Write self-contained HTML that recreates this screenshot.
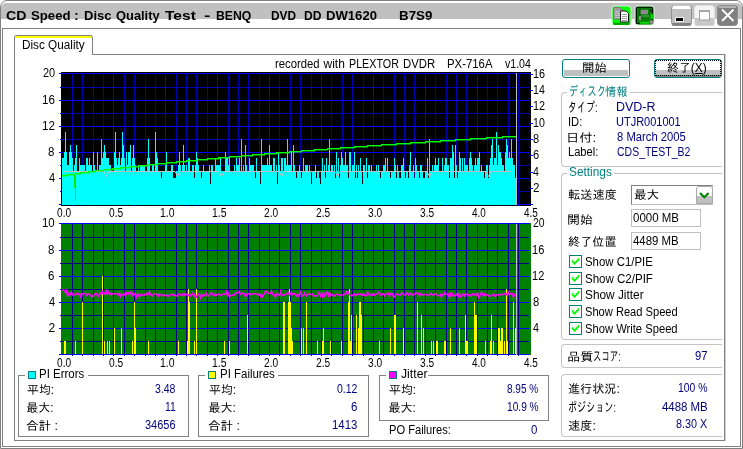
<!DOCTYPE html><html><head><meta charset="utf-8"><title>CD Speed</title><style>
html,body{margin:0;padding:0;background:#fff;}
body{width:743px;height:449px;position:relative;overflow:hidden;font-family:"Liberation Sans","IPAGothic","Noto Sans CJK JP",sans-serif;font-size:12px;color:#000;}
.a{position:absolute;box-sizing:border-box;}
.t{position:absolute;white-space:nowrap;line-height:16px;height:16px;transform-origin:0 0;display:inline-block;}
.grp{position:absolute;box-sizing:border-box;border:1px solid #c4c4c4;border-right-color:transparent;border-radius:4px 2px 2px 4px;}
.sq{position:absolute;box-sizing:border-box;border:1px solid #808080;}
.edit{position:absolute;box-sizing:border-box;border:1px solid #c0c0c0;background:#fff;}
.cb{position:absolute;box-sizing:border-box;width:13px;height:13px;border:1px solid #008080;background:#fff;}
.leg{position:absolute;box-sizing:border-box;width:8px;height:8px;border:1px solid #008080;}
.btn{position:absolute;box-sizing:border-box;border:1px solid #008080;border-radius:3px;background:#fff;}
.btn i{position:absolute;left:1px;right:1px;top:10px;height:6px;background:#c0c0c0;}
.mask{position:absolute;background:#fff;}
</style></head><body>
<div class="a" style="left:0;top:0;width:743px;height:449px;border:1px solid #808080;border-radius:7px 7px 0 0;"></div>
<div class="a" style="left:1px;top:3px;width:741px;height:16px;background:#c0c0c0;border-radius:5px 5px 0 0;"></div>
<div class="a" style="left:2px;top:28px;width:739px;height:419px;border:1px solid #808080;"></div>
<div class="a" style="left:14px;top:54px;width:711px;height:387px;border:1px solid #808080;box-shadow:1px 0 0 #d4d4d4;"></div>
<div class="a" style="left:14px;top:35px;width:79px;height:20px;border:1px solid #808080;border-bottom:none;border-radius:3px 3px 0 0;background:#fff;"></div>
<div class="a" style="left:15px;top:36px;width:77px;height:2px;background:#ffff00;border-radius:2px 2px 0 0;"></div>

<svg class="a" style="left:606px;top:0" width="137" height="30" viewBox="606 0 137 30">
<rect x="612" y="6" width="19" height="19" rx="3" fill="#00ff00" stroke="#e8ffe8" stroke-width="0.8"/>
<path d="M613 22.5h17v1a1.500 1.500 0 0 1 -1.500 1.500h-14a1.500 1.500 0 0 1 -1.500 -1.500z" fill="#00a800"/>
<path d="M613.500 7.500h6.500l2.500 2.500v9h-9z" fill="#9c9c9c" stroke="#787878" stroke-width="1"/>
<path d="M615 11.500h5M615 13.500h5M615 15.500h5M615 17.500h5" stroke="#c8c8c8" stroke-width="1"/>
<path d="M620.500 11h5.500l2.500 2.500v8.500h-8z" fill="#fff" stroke="#181818" stroke-width="1"/>
<path d="M622 14.500h5M622 16.500h5M622 18.500h5M622 20.500h5" stroke="#a0a0a0" stroke-width="1"/>
<rect x="635" y="6" width="19" height="19" rx="3" fill="#008000" stroke="#e8ffe8" stroke-width="0.800"/>
<rect x="636.500" y="7.500" width="16" height="16" fill="none" stroke="#001800" stroke-width="1"/>
<rect x="640.500" y="9.800" width="7.500" height="4.500" fill="#8c8c8c"/>
<rect x="639" y="8.500" width="1.300" height="12" fill="#303030"/>
<rect x="650" y="9.500" width="1.500" height="2" fill="#101010"/>
<rect x="639" y="16" width="2" height="4.500" fill="#909090"/>
<rect x="641.500" y="15.500" width="8" height="1" fill="#70a070"/>
<rect x="639.800" y="21.800" width="9.600" height="2" fill="#00e000"/>
<rect x="650.600" y="14" width="2.900" height="5" fill="#00d000"/>
<rect x="649.800" y="20.400" width="3.300" height="3.400" fill="#909090"/>
<rect x="671.5" y="5.5" width="20" height="20" rx="3" fill="#c0c0c0" stroke="#909090" stroke-width="1"/>
<path d="M672.5 9v-1.500a2 2 0 0 1 2 -2h14a2 2 0 0 1 2 2v1.500z" fill="#fff"/>
<rect x="672" y="23" width="19" height="2.500" fill="#808080"/>
<rect x="675" y="17" width="9" height="5" fill="#f0f0f0"/>
<rect x="676" y="18" width="7" height="3" fill="#000"/>
<rect x="694.500" y="5.500" width="20" height="20" rx="3" fill="#f4f4f4" stroke="#e0e0e0" stroke-width="1"/>
<rect x="695" y="18" width="19" height="7.500" fill="#c8c8c8"/>
<rect x="699.500" y="10.500" width="10" height="9.500" fill="#fff" stroke="#a0a0a0" stroke-width="1"/>
<rect x="699.500" y="10" width="10" height="2" fill="#a8a8a8"/>
<rect x="717.500" y="5.500" width="20" height="20" rx="3" fill="#808080" stroke="#8c8c8c" stroke-width="1"/>
<rect x="719" y="6" width="17" height="2" fill="#b4b4b4"/>
<path d="M722 9.500L733.500 21M733.500 9.500L722 21" stroke="#fff" stroke-width="1.800" fill="none"/>
</svg>

<div class="btn" style="left:562px;top:59px;width:68px;height:19px;"><i></i></div>
<div class="btn" style="left:654px;top:59px;width:68px;height:19px;"><i style="left:0;right:0;height:5px"></i><i style="left:0;right:0;top:15px;height:2px;background:#808080"></i></div>
<div class="a" style="left:655px;top:60px;width:66px;height:16px;border:1px dotted #000;"></div>
<div class="grp" style="left:561px;top:92px;width:162px;height:75px;"></div>
<div class="mask" style="left:567px;top:91px;width:63px;height:3px;"></div>
<div class="grp" style="left:561px;top:173px;width:162px;height:167px;"></div>
<div class="mask" style="left:567px;top:172px;width:47px;height:3px;"></div>
<div class="grp" style="left:561px;top:344px;width:162px;height:24px;"></div>
<div class="grp" style="left:561px;top:374px;width:162px;height:63px;"></div>
<div class="a" style="left:631px;top:185px;width:82px;height:20px;border:1px solid #808080;border-right-color:#c0c0c0;border-bottom-color:#c0c0c0;background:#fff;"></div>
<div class="a" style="left:696px;top:186px;width:17px;height:18px;background:linear-gradient(#fff 0,#fff 9px,#c0c0c0 9px,#c0c0c0 100%);border:1px solid #a8a8a8;border-radius:3px 3px 0 0;"></div>
<svg class="a" style="left:696px;top:186px" width="17" height="18" viewBox="0 0 17 18"><path d="M4 7 L8.3 11.3 L12.600 7" fill="none" stroke="#008000" stroke-width="2.200"/></svg>
<div class="edit" style="left:631px;top:209px;width:70px;height:18px;"></div>
<div class="edit" style="left:631px;top:232px;width:70px;height:18px;"></div>
<div class="cb" style="left:569px;top:255.0px;"></div>
<svg class="a" style="left:569px;top:255.0px" width="13" height="13" viewBox="0 0 13 13"><path d="M3 4.5v2.8l2.5 2.700l4.500-4.800v-2.800l-4.500 4.800z" fill="#00ff00"/></svg>
<div class="cb" style="left:569px;top:272.0px;"></div>
<svg class="a" style="left:569px;top:272.0px" width="13" height="13" viewBox="0 0 13 13"><path d="M3 4.5v2.8l2.5 2.700l4.500-4.800v-2.800l-4.500 4.800z" fill="#00ff00"/></svg>
<div class="cb" style="left:569px;top:288.0px;"></div>
<svg class="a" style="left:569px;top:288.0px" width="13" height="13" viewBox="0 0 13 13"><path d="M3 4.5v2.8l2.5 2.700l4.500-4.800v-2.800l-4.500 4.800z" fill="#00ff00"/></svg>
<div class="cb" style="left:569px;top:305.0px;"></div>
<svg class="a" style="left:569px;top:305.0px" width="13" height="13" viewBox="0 0 13 13"><path d="M3 4.5v2.8l2.5 2.700l4.500-4.800v-2.800l-4.500 4.800z" fill="#00ff00"/></svg>
<div class="cb" style="left:569px;top:322.0px;"></div>
<svg class="a" style="left:569px;top:322.0px" width="13" height="13" viewBox="0 0 13 13"><path d="M3 4.5v2.8l2.5 2.700l4.500-4.800v-2.800l-4.500 4.800z" fill="#00ff00"/></svg>
<div class="sq" style="left:18px;top:375px;width:171px;height:62px;"></div>
<div class="mask" style="left:25px;top:374px;width:63px;height:3px;"></div>
<div class="leg" style="left:28px;top:371px;background:#00ffff;"></div>
<div class="sq" style="left:198px;top:375px;width:171px;height:62px;"></div>
<div class="mask" style="left:205px;top:374px;width:73px;height:3px;"></div>
<div class="leg" style="left:208px;top:371px;background:#ffff00;"></div>
<div class="sq" style="left:379px;top:375px;width:170px;height:46px;"></div>
<div class="mask" style="left:386px;top:374px;width:42px;height:3px;"></div>
<div class="leg" style="left:389px;top:371px;background:#ff00ff;"></div>
<svg id="charts" width="743" height="449" viewBox="0 0 743 449" style="position:absolute;left:0;top:0" shape-rendering="crispEdges">
<rect x="61" y="72" width="470" height="134" fill="#000"/>
<rect x="72" y="73" width="1" height="133" fill="#0000b0"/>
<rect x="82" y="73" width="1" height="133" fill="#0000b0"/>
<rect x="93" y="73" width="1" height="133" fill="#0000b0"/>
<rect x="103" y="73" width="1" height="133" fill="#0000b0"/>
<rect x="113" y="73" width="1" height="133" fill="#0000ff"/>
<rect x="124" y="73" width="1" height="133" fill="#0000b0"/>
<rect x="134" y="73" width="1" height="133" fill="#0000b0"/>
<rect x="145" y="73" width="1" height="133" fill="#0000b0"/>
<rect x="155" y="73" width="1" height="133" fill="#0000b0"/>
<rect x="165" y="73" width="1" height="133" fill="#0000ff"/>
<rect x="176" y="73" width="1" height="133" fill="#0000b0"/>
<rect x="186" y="73" width="1" height="133" fill="#0000b0"/>
<rect x="196" y="73" width="1" height="133" fill="#0000b0"/>
<rect x="207" y="73" width="1" height="133" fill="#0000b0"/>
<rect x="217" y="73" width="1" height="133" fill="#0000ff"/>
<rect x="228" y="73" width="1" height="133" fill="#0000b0"/>
<rect x="238" y="73" width="1" height="133" fill="#0000b0"/>
<rect x="248" y="73" width="1" height="133" fill="#0000b0"/>
<rect x="259" y="73" width="1" height="133" fill="#0000b0"/>
<rect x="269" y="73" width="1" height="133" fill="#0000ff"/>
<rect x="279" y="73" width="1" height="133" fill="#0000b0"/>
<rect x="290" y="73" width="1" height="133" fill="#0000b0"/>
<rect x="300" y="73" width="1" height="133" fill="#0000b0"/>
<rect x="311" y="73" width="1" height="133" fill="#0000b0"/>
<rect x="321" y="73" width="1" height="133" fill="#0000ff"/>
<rect x="331" y="73" width="1" height="133" fill="#0000b0"/>
<rect x="342" y="73" width="1" height="133" fill="#0000b0"/>
<rect x="352" y="73" width="1" height="133" fill="#0000b0"/>
<rect x="363" y="73" width="1" height="133" fill="#0000b0"/>
<rect x="373" y="73" width="1" height="133" fill="#0000ff"/>
<rect x="383" y="73" width="1" height="133" fill="#0000b0"/>
<rect x="394" y="73" width="1" height="133" fill="#0000b0"/>
<rect x="404" y="73" width="1" height="133" fill="#0000b0"/>
<rect x="414" y="73" width="1" height="133" fill="#0000b0"/>
<rect x="425" y="73" width="1" height="133" fill="#0000ff"/>
<rect x="435" y="73" width="1" height="133" fill="#0000b0"/>
<rect x="446" y="73" width="1" height="133" fill="#0000b0"/>
<rect x="456" y="73" width="1" height="133" fill="#0000b0"/>
<rect x="466" y="73" width="1" height="133" fill="#0000b0"/>
<rect x="477" y="73" width="1" height="133" fill="#0000ff"/>
<rect x="487" y="73" width="1" height="133" fill="#0000b0"/>
<rect x="497" y="73" width="1" height="133" fill="#0000b0"/>
<rect x="508" y="73" width="1" height="133" fill="#0000b0"/>
<rect x="518" y="73" width="1" height="133" fill="#0000b0"/>
<rect x="59" y="204" width="470" height="1" fill="#0000ff"/>
<rect x="60" y="191" width="469" height="1" fill="#0000b0"/>
<rect x="59" y="178" width="470" height="1" fill="#0000ff"/>
<rect x="60" y="165" width="469" height="1" fill="#0000b0"/>
<rect x="59" y="152" width="470" height="1" fill="#0000ff"/>
<rect x="60" y="139" width="469" height="1" fill="#0000b0"/>
<rect x="59" y="126" width="470" height="1" fill="#0000ff"/>
<rect x="60" y="113" width="469" height="1" fill="#0000b0"/>
<rect x="59" y="100" width="470" height="1" fill="#0000ff"/>
<rect x="60" y="87" width="469" height="1" fill="#0000b0"/>
<rect x="59" y="73" width="470" height="1" fill="#0000ff"/>
<rect x="529" y="204" width="4" height="1" fill="#0000ff"/>
<rect x="529" y="196" width="2" height="1" fill="#0000e0"/>
<rect x="529" y="188" width="4" height="1" fill="#0000ff"/>
<rect x="529" y="180" width="2" height="1" fill="#0000e0"/>
<rect x="529" y="172" width="4" height="1" fill="#0000ff"/>
<rect x="529" y="164" width="2" height="1" fill="#0000e0"/>
<rect x="529" y="155" width="4" height="1" fill="#0000ff"/>
<rect x="529" y="147" width="2" height="1" fill="#0000e0"/>
<rect x="529" y="139" width="4" height="1" fill="#0000ff"/>
<rect x="529" y="131" width="2" height="1" fill="#0000e0"/>
<rect x="529" y="123" width="4" height="1" fill="#0000ff"/>
<rect x="529" y="114" width="2" height="1" fill="#0000e0"/>
<rect x="529" y="106" width="4" height="1" fill="#0000ff"/>
<rect x="529" y="98" width="2" height="1" fill="#0000e0"/>
<rect x="529" y="90" width="4" height="1" fill="#0000ff"/>
<rect x="529" y="82" width="2" height="1" fill="#0000e0"/>
<rect x="529" y="74" width="4" height="1" fill="#0000ff"/>
<rect x="62" y="158" width="2" height="47" fill="#00ffff"/>
<rect x="64" y="152" width="1" height="53" fill="#00ffff"/>
<rect x="65" y="132" width="1" height="73" fill="#00ffff"/>
<rect x="66" y="152" width="1" height="53" fill="#00ffff"/>
<rect x="67" y="165" width="2" height="40" fill="#00ffff"/>
<rect x="69" y="152" width="1" height="53" fill="#00ffff"/>
<rect x="70" y="145" width="1" height="60" fill="#00ffff"/>
<rect x="71" y="152" width="1" height="53" fill="#00ffff"/>
<rect x="72" y="158" width="1" height="47" fill="#00ffff"/>
<rect x="73" y="171" width="1" height="34" fill="#00ffff"/>
<rect x="74" y="165" width="1" height="40" fill="#00ffff"/>
<rect x="75" y="158" width="1" height="47" fill="#00ffff"/>
<rect x="76" y="145" width="1" height="60" fill="#00ffff"/>
<rect x="77" y="171" width="2" height="34" fill="#00ffff"/>
<rect x="79" y="158" width="1" height="47" fill="#00ffff"/>
<rect x="80" y="165" width="5" height="40" fill="#00ffff"/>
<rect x="85" y="171" width="1" height="34" fill="#00ffff"/>
<rect x="86" y="158" width="2" height="47" fill="#00ffff"/>
<rect x="88" y="165" width="1" height="40" fill="#00ffff"/>
<rect x="89" y="158" width="1" height="47" fill="#00ffff"/>
<rect x="90" y="165" width="2" height="40" fill="#00ffff"/>
<rect x="92" y="171" width="1" height="34" fill="#00ffff"/>
<rect x="93" y="152" width="1" height="53" fill="#00ffff"/>
<rect x="94" y="165" width="1" height="40" fill="#00ffff"/>
<rect x="95" y="171" width="2" height="34" fill="#00ffff"/>
<rect x="97" y="152" width="1" height="53" fill="#00ffff"/>
<rect x="98" y="171" width="1" height="34" fill="#00ffff"/>
<rect x="99" y="165" width="2" height="40" fill="#00ffff"/>
<rect x="101" y="139" width="1" height="66" fill="#00ffff"/>
<rect x="102" y="158" width="1" height="47" fill="#00ffff"/>
<rect x="103" y="152" width="1" height="53" fill="#00ffff"/>
<rect x="104" y="145" width="1" height="60" fill="#00ffff"/>
<rect x="105" y="152" width="1" height="53" fill="#00ffff"/>
<rect x="106" y="158" width="3" height="47" fill="#00ffff"/>
<rect x="109" y="165" width="2" height="40" fill="#00ffff"/>
<rect x="111" y="171" width="3" height="34" fill="#00ffff"/>
<rect x="114" y="152" width="1" height="53" fill="#00ffff"/>
<rect x="115" y="132" width="1" height="73" fill="#00ffff"/>
<rect x="116" y="158" width="1" height="47" fill="#00ffff"/>
<rect x="117" y="165" width="1" height="40" fill="#00ffff"/>
<rect x="118" y="158" width="1" height="47" fill="#00ffff"/>
<rect x="119" y="152" width="1" height="53" fill="#00ffff"/>
<rect x="120" y="165" width="1" height="40" fill="#00ffff"/>
<rect x="121" y="158" width="1" height="47" fill="#00ffff"/>
<rect x="122" y="132" width="1" height="73" fill="#00ffff"/>
<rect x="123" y="145" width="1" height="60" fill="#00ffff"/>
<rect x="124" y="158" width="1" height="47" fill="#00ffff"/>
<rect x="125" y="171" width="1" height="34" fill="#00ffff"/>
<rect x="126" y="152" width="1" height="53" fill="#00ffff"/>
<rect x="127" y="165" width="1" height="40" fill="#00ffff"/>
<rect x="128" y="152" width="2" height="53" fill="#00ffff"/>
<rect x="130" y="145" width="1" height="60" fill="#00ffff"/>
<rect x="131" y="171" width="1" height="34" fill="#00ffff"/>
<rect x="132" y="158" width="1" height="47" fill="#00ffff"/>
<rect x="133" y="145" width="1" height="60" fill="#00ffff"/>
<rect x="134" y="158" width="1" height="47" fill="#00ffff"/>
<rect x="135" y="165" width="1" height="40" fill="#00ffff"/>
<rect x="136" y="171" width="2" height="34" fill="#00ffff"/>
<rect x="138" y="165" width="1" height="40" fill="#00ffff"/>
<rect x="139" y="171" width="1" height="34" fill="#00ffff"/>
<rect x="140" y="165" width="5" height="40" fill="#00ffff"/>
<rect x="145" y="171" width="2" height="34" fill="#00ffff"/>
<rect x="147" y="158" width="1" height="47" fill="#00ffff"/>
<rect x="148" y="139" width="1" height="66" fill="#00ffff"/>
<rect x="149" y="158" width="1" height="47" fill="#00ffff"/>
<rect x="150" y="171" width="2" height="34" fill="#00ffff"/>
<rect x="152" y="165" width="2" height="40" fill="#00ffff"/>
<rect x="154" y="171" width="1" height="34" fill="#00ffff"/>
<rect x="155" y="132" width="1" height="73" fill="#00ffff"/>
<rect x="156" y="152" width="1" height="53" fill="#00ffff"/>
<rect x="157" y="158" width="1" height="47" fill="#00ffff"/>
<rect x="158" y="171" width="3" height="34" fill="#00ffff"/>
<rect x="161" y="178" width="1" height="27" fill="#00ffff"/>
<rect x="162" y="171" width="3" height="34" fill="#00ffff"/>
<rect x="165" y="165" width="1" height="40" fill="#00ffff"/>
<rect x="166" y="152" width="1" height="53" fill="#00ffff"/>
<rect x="167" y="171" width="4" height="34" fill="#00ffff"/>
<rect x="171" y="165" width="2" height="40" fill="#00ffff"/>
<rect x="173" y="178" width="3" height="27" fill="#00ffff"/>
<rect x="176" y="171" width="2" height="34" fill="#00ffff"/>
<rect x="178" y="165" width="1" height="40" fill="#00ffff"/>
<rect x="179" y="152" width="1" height="53" fill="#00ffff"/>
<rect x="180" y="165" width="1" height="40" fill="#00ffff"/>
<rect x="181" y="171" width="1" height="34" fill="#00ffff"/>
<rect x="182" y="165" width="1" height="40" fill="#00ffff"/>
<rect x="183" y="145" width="1" height="60" fill="#00ffff"/>
<rect x="184" y="165" width="1" height="40" fill="#00ffff"/>
<rect x="185" y="171" width="1" height="34" fill="#00ffff"/>
<rect x="186" y="165" width="1" height="40" fill="#00ffff"/>
<rect x="187" y="171" width="1" height="34" fill="#00ffff"/>
<rect x="188" y="158" width="2" height="47" fill="#00ffff"/>
<rect x="190" y="171" width="2" height="34" fill="#00ffff"/>
<rect x="192" y="165" width="2" height="40" fill="#00ffff"/>
<rect x="194" y="178" width="1" height="27" fill="#00ffff"/>
<rect x="195" y="165" width="1" height="40" fill="#00ffff"/>
<rect x="196" y="152" width="1" height="53" fill="#00ffff"/>
<rect x="197" y="158" width="1" height="47" fill="#00ffff"/>
<rect x="198" y="165" width="1" height="40" fill="#00ffff"/>
<rect x="199" y="171" width="2" height="34" fill="#00ffff"/>
<rect x="201" y="178" width="1" height="27" fill="#00ffff"/>
<rect x="202" y="171" width="1" height="34" fill="#00ffff"/>
<rect x="203" y="165" width="1" height="40" fill="#00ffff"/>
<rect x="204" y="171" width="5" height="34" fill="#00ffff"/>
<rect x="209" y="165" width="1" height="40" fill="#00ffff"/>
<rect x="210" y="184" width="1" height="21" fill="#00ffff"/>
<rect x="211" y="165" width="2" height="40" fill="#00ffff"/>
<rect x="213" y="171" width="2" height="34" fill="#00ffff"/>
<rect x="215" y="158" width="1" height="47" fill="#00ffff"/>
<rect x="216" y="165" width="4" height="40" fill="#00ffff"/>
<rect x="220" y="158" width="1" height="47" fill="#00ffff"/>
<rect x="221" y="171" width="4" height="34" fill="#00ffff"/>
<rect x="225" y="152" width="1" height="53" fill="#00ffff"/>
<rect x="226" y="158" width="2" height="47" fill="#00ffff"/>
<rect x="228" y="165" width="1" height="40" fill="#00ffff"/>
<rect x="229" y="158" width="1" height="47" fill="#00ffff"/>
<rect x="230" y="171" width="4" height="34" fill="#00ffff"/>
<rect x="234" y="165" width="1" height="40" fill="#00ffff"/>
<rect x="235" y="171" width="1" height="34" fill="#00ffff"/>
<rect x="236" y="158" width="1" height="47" fill="#00ffff"/>
<rect x="237" y="165" width="2" height="40" fill="#00ffff"/>
<rect x="239" y="158" width="1" height="47" fill="#00ffff"/>
<rect x="240" y="171" width="1" height="34" fill="#00ffff"/>
<rect x="241" y="139" width="1" height="66" fill="#00ffff"/>
<rect x="242" y="171" width="1" height="34" fill="#00ffff"/>
<rect x="243" y="165" width="1" height="40" fill="#00ffff"/>
<rect x="244" y="171" width="1" height="34" fill="#00ffff"/>
<rect x="245" y="145" width="1" height="60" fill="#00ffff"/>
<rect x="246" y="165" width="1" height="40" fill="#00ffff"/>
<rect x="247" y="171" width="2" height="34" fill="#00ffff"/>
<rect x="249" y="158" width="1" height="47" fill="#00ffff"/>
<rect x="250" y="165" width="4" height="40" fill="#00ffff"/>
<rect x="254" y="171" width="1" height="34" fill="#00ffff"/>
<rect x="255" y="178" width="1" height="27" fill="#00ffff"/>
<rect x="256" y="158" width="1" height="47" fill="#00ffff"/>
<rect x="257" y="171" width="3" height="34" fill="#00ffff"/>
<rect x="260" y="184" width="1" height="21" fill="#00ffff"/>
<rect x="261" y="139" width="1" height="66" fill="#00ffff"/>
<rect x="262" y="165" width="5" height="40" fill="#00ffff"/>
<rect x="267" y="158" width="1" height="47" fill="#00ffff"/>
<rect x="268" y="165" width="1" height="40" fill="#00ffff"/>
<rect x="269" y="145" width="1" height="60" fill="#00ffff"/>
<rect x="270" y="165" width="2" height="40" fill="#00ffff"/>
<rect x="272" y="171" width="1" height="34" fill="#00ffff"/>
<rect x="273" y="158" width="2" height="47" fill="#00ffff"/>
<rect x="275" y="171" width="1" height="34" fill="#00ffff"/>
<rect x="276" y="165" width="1" height="40" fill="#00ffff"/>
<rect x="277" y="184" width="1" height="21" fill="#00ffff"/>
<rect x="278" y="152" width="1" height="53" fill="#00ffff"/>
<rect x="279" y="165" width="1" height="40" fill="#00ffff"/>
<rect x="280" y="171" width="1" height="34" fill="#00ffff"/>
<rect x="281" y="158" width="2" height="47" fill="#00ffff"/>
<rect x="283" y="171" width="1" height="34" fill="#00ffff"/>
<rect x="284" y="158" width="2" height="47" fill="#00ffff"/>
<rect x="286" y="165" width="1" height="40" fill="#00ffff"/>
<rect x="287" y="139" width="1" height="66" fill="#00ffff"/>
<rect x="288" y="165" width="3" height="40" fill="#00ffff"/>
<rect x="291" y="152" width="1" height="53" fill="#00ffff"/>
<rect x="292" y="171" width="1" height="34" fill="#00ffff"/>
<rect x="293" y="145" width="1" height="60" fill="#00ffff"/>
<rect x="294" y="165" width="1" height="40" fill="#00ffff"/>
<rect x="295" y="171" width="1" height="34" fill="#00ffff"/>
<rect x="296" y="178" width="1" height="27" fill="#00ffff"/>
<rect x="297" y="171" width="2" height="34" fill="#00ffff"/>
<rect x="299" y="165" width="1" height="40" fill="#00ffff"/>
<rect x="300" y="171" width="1" height="34" fill="#00ffff"/>
<rect x="301" y="178" width="1" height="27" fill="#00ffff"/>
<rect x="302" y="171" width="1" height="34" fill="#00ffff"/>
<rect x="303" y="158" width="1" height="47" fill="#00ffff"/>
<rect x="304" y="171" width="1" height="34" fill="#00ffff"/>
<rect x="305" y="165" width="3" height="40" fill="#00ffff"/>
<rect x="308" y="171" width="1" height="34" fill="#00ffff"/>
<rect x="309" y="165" width="1" height="40" fill="#00ffff"/>
<rect x="310" y="171" width="1" height="34" fill="#00ffff"/>
<rect x="311" y="184" width="1" height="21" fill="#00ffff"/>
<rect x="312" y="171" width="3" height="34" fill="#00ffff"/>
<rect x="315" y="165" width="1" height="40" fill="#00ffff"/>
<rect x="316" y="178" width="1" height="27" fill="#00ffff"/>
<rect x="317" y="171" width="2" height="34" fill="#00ffff"/>
<rect x="319" y="178" width="1" height="27" fill="#00ffff"/>
<rect x="320" y="184" width="1" height="21" fill="#00ffff"/>
<rect x="321" y="171" width="1" height="34" fill="#00ffff"/>
<rect x="322" y="158" width="1" height="47" fill="#00ffff"/>
<rect x="323" y="171" width="1" height="34" fill="#00ffff"/>
<rect x="324" y="165" width="1" height="40" fill="#00ffff"/>
<rect x="325" y="178" width="1" height="27" fill="#00ffff"/>
<rect x="326" y="158" width="1" height="47" fill="#00ffff"/>
<rect x="327" y="171" width="1" height="34" fill="#00ffff"/>
<rect x="328" y="165" width="1" height="40" fill="#00ffff"/>
<rect x="329" y="139" width="1" height="66" fill="#00ffff"/>
<rect x="330" y="171" width="1" height="34" fill="#00ffff"/>
<rect x="331" y="165" width="2" height="40" fill="#00ffff"/>
<rect x="333" y="171" width="1" height="34" fill="#00ffff"/>
<rect x="334" y="165" width="1" height="40" fill="#00ffff"/>
<rect x="335" y="178" width="1" height="27" fill="#00ffff"/>
<rect x="336" y="152" width="1" height="53" fill="#00ffff"/>
<rect x="337" y="171" width="1" height="34" fill="#00ffff"/>
<rect x="338" y="158" width="1" height="47" fill="#00ffff"/>
<rect x="339" y="178" width="1" height="27" fill="#00ffff"/>
<rect x="340" y="165" width="1" height="40" fill="#00ffff"/>
<rect x="341" y="152" width="1" height="53" fill="#00ffff"/>
<rect x="342" y="158" width="1" height="47" fill="#00ffff"/>
<rect x="343" y="165" width="2" height="40" fill="#00ffff"/>
<rect x="345" y="152" width="1" height="53" fill="#00ffff"/>
<rect x="346" y="165" width="2" height="40" fill="#00ffff"/>
<rect x="348" y="178" width="1" height="27" fill="#00ffff"/>
<rect x="349" y="152" width="2" height="53" fill="#00ffff"/>
<rect x="351" y="171" width="1" height="34" fill="#00ffff"/>
<rect x="352" y="165" width="2" height="40" fill="#00ffff"/>
<rect x="354" y="152" width="1" height="53" fill="#00ffff"/>
<rect x="355" y="178" width="1" height="27" fill="#00ffff"/>
<rect x="356" y="165" width="1" height="40" fill="#00ffff"/>
<rect x="357" y="178" width="1" height="27" fill="#00ffff"/>
<rect x="358" y="165" width="1" height="40" fill="#00ffff"/>
<rect x="359" y="171" width="1" height="34" fill="#00ffff"/>
<rect x="360" y="158" width="1" height="47" fill="#00ffff"/>
<rect x="361" y="171" width="1" height="34" fill="#00ffff"/>
<rect x="362" y="184" width="1" height="21" fill="#00ffff"/>
<rect x="363" y="165" width="2" height="40" fill="#00ffff"/>
<rect x="365" y="171" width="1" height="34" fill="#00ffff"/>
<rect x="366" y="158" width="1" height="47" fill="#00ffff"/>
<rect x="367" y="178" width="1" height="27" fill="#00ffff"/>
<rect x="368" y="165" width="2" height="40" fill="#00ffff"/>
<rect x="370" y="171" width="1" height="34" fill="#00ffff"/>
<rect x="371" y="165" width="1" height="40" fill="#00ffff"/>
<rect x="372" y="171" width="4" height="34" fill="#00ffff"/>
<rect x="376" y="165" width="1" height="40" fill="#00ffff"/>
<rect x="377" y="171" width="1" height="34" fill="#00ffff"/>
<rect x="378" y="165" width="1" height="40" fill="#00ffff"/>
<rect x="379" y="171" width="1" height="34" fill="#00ffff"/>
<rect x="380" y="178" width="1" height="27" fill="#00ffff"/>
<rect x="381" y="171" width="2" height="34" fill="#00ffff"/>
<rect x="383" y="165" width="2" height="40" fill="#00ffff"/>
<rect x="385" y="158" width="1" height="47" fill="#00ffff"/>
<rect x="386" y="171" width="1" height="34" fill="#00ffff"/>
<rect x="387" y="158" width="1" height="47" fill="#00ffff"/>
<rect x="388" y="171" width="2" height="34" fill="#00ffff"/>
<rect x="390" y="178" width="1" height="27" fill="#00ffff"/>
<rect x="391" y="171" width="3" height="34" fill="#00ffff"/>
<rect x="394" y="158" width="1" height="47" fill="#00ffff"/>
<rect x="395" y="165" width="1" height="40" fill="#00ffff"/>
<rect x="396" y="178" width="1" height="27" fill="#00ffff"/>
<rect x="397" y="165" width="1" height="40" fill="#00ffff"/>
<rect x="398" y="171" width="1" height="34" fill="#00ffff"/>
<rect x="399" y="178" width="2" height="27" fill="#00ffff"/>
<rect x="401" y="165" width="2" height="40" fill="#00ffff"/>
<rect x="403" y="158" width="1" height="47" fill="#00ffff"/>
<rect x="404" y="171" width="1" height="34" fill="#00ffff"/>
<rect x="405" y="178" width="1" height="27" fill="#00ffff"/>
<rect x="406" y="171" width="2" height="34" fill="#00ffff"/>
<rect x="408" y="178" width="1" height="27" fill="#00ffff"/>
<rect x="409" y="165" width="1" height="40" fill="#00ffff"/>
<rect x="410" y="152" width="1" height="53" fill="#00ffff"/>
<rect x="411" y="171" width="2" height="34" fill="#00ffff"/>
<rect x="413" y="165" width="1" height="40" fill="#00ffff"/>
<rect x="414" y="178" width="1" height="27" fill="#00ffff"/>
<rect x="415" y="158" width="1" height="47" fill="#00ffff"/>
<rect x="416" y="165" width="1" height="40" fill="#00ffff"/>
<rect x="417" y="171" width="2" height="34" fill="#00ffff"/>
<rect x="419" y="178" width="1" height="27" fill="#00ffff"/>
<rect x="420" y="165" width="2" height="40" fill="#00ffff"/>
<rect x="422" y="171" width="1" height="34" fill="#00ffff"/>
<rect x="423" y="178" width="2" height="27" fill="#00ffff"/>
<rect x="425" y="171" width="2" height="34" fill="#00ffff"/>
<rect x="427" y="158" width="1" height="47" fill="#00ffff"/>
<rect x="428" y="178" width="1" height="27" fill="#00ffff"/>
<rect x="429" y="139" width="1" height="66" fill="#00ffff"/>
<rect x="430" y="171" width="2" height="34" fill="#00ffff"/>
<rect x="432" y="165" width="1" height="40" fill="#00ffff"/>
<rect x="433" y="171" width="1" height="34" fill="#00ffff"/>
<rect x="434" y="165" width="1" height="40" fill="#00ffff"/>
<rect x="435" y="158" width="1" height="47" fill="#00ffff"/>
<rect x="436" y="165" width="2" height="40" fill="#00ffff"/>
<rect x="438" y="158" width="1" height="47" fill="#00ffff"/>
<rect x="439" y="171" width="3" height="34" fill="#00ffff"/>
<rect x="442" y="158" width="1" height="47" fill="#00ffff"/>
<rect x="443" y="171" width="1" height="34" fill="#00ffff"/>
<rect x="444" y="165" width="1" height="40" fill="#00ffff"/>
<rect x="445" y="158" width="2" height="47" fill="#00ffff"/>
<rect x="447" y="165" width="2" height="40" fill="#00ffff"/>
<rect x="449" y="178" width="1" height="27" fill="#00ffff"/>
<rect x="450" y="158" width="2" height="47" fill="#00ffff"/>
<rect x="452" y="145" width="1" height="60" fill="#00ffff"/>
<rect x="453" y="152" width="1" height="53" fill="#00ffff"/>
<rect x="454" y="178" width="1" height="27" fill="#00ffff"/>
<rect x="455" y="145" width="1" height="60" fill="#00ffff"/>
<rect x="456" y="165" width="1" height="40" fill="#00ffff"/>
<rect x="457" y="178" width="1" height="27" fill="#00ffff"/>
<rect x="458" y="171" width="1" height="34" fill="#00ffff"/>
<rect x="459" y="152" width="1" height="53" fill="#00ffff"/>
<rect x="460" y="158" width="1" height="47" fill="#00ffff"/>
<rect x="461" y="171" width="1" height="34" fill="#00ffff"/>
<rect x="462" y="158" width="1" height="47" fill="#00ffff"/>
<rect x="463" y="171" width="1" height="34" fill="#00ffff"/>
<rect x="464" y="158" width="1" height="47" fill="#00ffff"/>
<rect x="465" y="165" width="3" height="40" fill="#00ffff"/>
<rect x="468" y="171" width="1" height="34" fill="#00ffff"/>
<rect x="469" y="158" width="1" height="47" fill="#00ffff"/>
<rect x="470" y="152" width="1" height="53" fill="#00ffff"/>
<rect x="471" y="158" width="1" height="47" fill="#00ffff"/>
<rect x="472" y="165" width="1" height="40" fill="#00ffff"/>
<rect x="473" y="171" width="1" height="34" fill="#00ffff"/>
<rect x="474" y="165" width="1" height="40" fill="#00ffff"/>
<rect x="475" y="158" width="1" height="47" fill="#00ffff"/>
<rect x="476" y="165" width="1" height="40" fill="#00ffff"/>
<rect x="477" y="158" width="2" height="47" fill="#00ffff"/>
<rect x="479" y="152" width="1" height="53" fill="#00ffff"/>
<rect x="480" y="171" width="1" height="34" fill="#00ffff"/>
<rect x="481" y="165" width="1" height="40" fill="#00ffff"/>
<rect x="482" y="171" width="2" height="34" fill="#00ffff"/>
<rect x="484" y="178" width="1" height="27" fill="#00ffff"/>
<rect x="485" y="171" width="1" height="34" fill="#00ffff"/>
<rect x="486" y="165" width="2" height="40" fill="#00ffff"/>
<rect x="488" y="178" width="1" height="27" fill="#00ffff"/>
<rect x="489" y="165" width="1" height="40" fill="#00ffff"/>
<rect x="490" y="158" width="1" height="47" fill="#00ffff"/>
<rect x="491" y="145" width="1" height="60" fill="#00ffff"/>
<rect x="492" y="139" width="1" height="66" fill="#00ffff"/>
<rect x="493" y="165" width="1" height="40" fill="#00ffff"/>
<rect x="494" y="158" width="2" height="47" fill="#00ffff"/>
<rect x="496" y="132" width="1" height="73" fill="#00ffff"/>
<rect x="497" y="165" width="1" height="40" fill="#00ffff"/>
<rect x="498" y="145" width="1" height="60" fill="#00ffff"/>
<rect x="499" y="152" width="2" height="53" fill="#00ffff"/>
<rect x="501" y="158" width="1" height="47" fill="#00ffff"/>
<rect x="502" y="165" width="2" height="40" fill="#00ffff"/>
<rect x="504" y="171" width="1" height="34" fill="#00ffff"/>
<rect x="505" y="152" width="1" height="53" fill="#00ffff"/>
<rect x="506" y="139" width="1" height="66" fill="#00ffff"/>
<rect x="507" y="145" width="1" height="60" fill="#00ffff"/>
<rect x="508" y="158" width="1" height="47" fill="#00ffff"/>
<rect x="509" y="152" width="1" height="53" fill="#00ffff"/>
<rect x="510" y="158" width="1" height="47" fill="#00ffff"/>
<rect x="511" y="139" width="1" height="66" fill="#00ffff"/>
<rect x="512" y="158" width="1" height="47" fill="#00ffff"/>
<rect x="513" y="165" width="2" height="40" fill="#00ffff"/>
<rect x="515" y="178" width="1" height="27" fill="#00ffff"/>
<rect x="516" y="158" width="1" height="47" fill="#00ffff"/>
<polyline fill="none" stroke="#c0c0c0" stroke-width="1" shape-rendering="auto" points="63.0,171.5 104.0,171.5 106.5,176.5 109.0,171.5 175.0,171.5 177.5,176.5 180.0,171.5 219.0,171.5 221.5,176.5 224.0,171.5 279.0,171.5 281.5,176.5 284.0,171.5 335.0,171.5 337.5,176.5 340.0,171.5 427.0,171.5 429.5,176.5 432.0,171.5 486.0,171.5 488.5,176.5 491.0,171.5 511.0,171.5"/>
<rect x="62" y="175" width="4" height="1" fill="#00ff00"/><rect x="66" y="174" width="1" height="2" fill="#00ff00"/><rect x="67" y="174" width="6" height="1" fill="#00ff00"/><rect x="73" y="173" width="1" height="2" fill="#00ff00"/><rect x="74" y="173" width="6" height="1" fill="#00ff00"/><rect x="80" y="172" width="1" height="2" fill="#00ff00"/><rect x="81" y="172" width="7" height="1" fill="#00ff00"/><rect x="88" y="171" width="1" height="2" fill="#00ff00"/><rect x="89" y="171" width="6" height="1" fill="#00ff00"/><rect x="95" y="170" width="1" height="2" fill="#00ff00"/><rect x="96" y="170" width="7" height="1" fill="#00ff00"/><rect x="103" y="169" width="1" height="2" fill="#00ff00"/><rect x="104" y="169" width="8" height="1" fill="#00ff00"/><rect x="112" y="168" width="1" height="2" fill="#00ff00"/><rect x="113" y="168" width="7" height="1" fill="#00ff00"/><rect x="120" y="167" width="1" height="2" fill="#00ff00"/><rect x="121" y="167" width="8" height="1" fill="#00ff00"/><rect x="129" y="166" width="1" height="2" fill="#00ff00"/><rect x="130" y="166" width="8" height="1" fill="#00ff00"/><rect x="138" y="165" width="1" height="2" fill="#00ff00"/><rect x="139" y="165" width="8" height="1" fill="#00ff00"/><rect x="147" y="164" width="1" height="2" fill="#00ff00"/><rect x="148" y="164" width="9" height="1" fill="#00ff00"/><rect x="157" y="163" width="1" height="2" fill="#00ff00"/><rect x="158" y="163" width="8" height="1" fill="#00ff00"/><rect x="166" y="162" width="1" height="2" fill="#00ff00"/><rect x="167" y="162" width="9" height="1" fill="#00ff00"/><rect x="176" y="161" width="1" height="2" fill="#00ff00"/><rect x="177" y="161" width="9" height="1" fill="#00ff00"/><rect x="186" y="160" width="1" height="2" fill="#00ff00"/><rect x="187" y="160" width="10" height="1" fill="#00ff00"/><rect x="197" y="159" width="1" height="2" fill="#00ff00"/><rect x="198" y="159" width="9" height="1" fill="#00ff00"/><rect x="207" y="158" width="1" height="2" fill="#00ff00"/><rect x="208" y="158" width="10" height="1" fill="#00ff00"/><rect x="218" y="157" width="1" height="2" fill="#00ff00"/><rect x="219" y="157" width="10" height="1" fill="#00ff00"/><rect x="229" y="156" width="1" height="2" fill="#00ff00"/><rect x="230" y="156" width="11" height="1" fill="#00ff00"/><rect x="241" y="155" width="1" height="2" fill="#00ff00"/><rect x="242" y="155" width="10" height="1" fill="#00ff00"/><rect x="252" y="154" width="1" height="2" fill="#00ff00"/><rect x="253" y="154" width="11" height="1" fill="#00ff00"/><rect x="264" y="153" width="1" height="2" fill="#00ff00"/><rect x="265" y="153" width="11" height="1" fill="#00ff00"/><rect x="276" y="152" width="1" height="2" fill="#00ff00"/><rect x="277" y="152" width="12" height="1" fill="#00ff00"/><rect x="289" y="151" width="1" height="2" fill="#00ff00"/><rect x="290" y="151" width="11" height="1" fill="#00ff00"/><rect x="301" y="150" width="1" height="2" fill="#00ff00"/><rect x="302" y="150" width="12" height="1" fill="#00ff00"/><rect x="314" y="149" width="1" height="2" fill="#00ff00"/><rect x="315" y="149" width="12" height="1" fill="#00ff00"/><rect x="327" y="148" width="1" height="2" fill="#00ff00"/><rect x="328" y="148" width="12" height="1" fill="#00ff00"/><rect x="340" y="147" width="1" height="2" fill="#00ff00"/><rect x="341" y="147" width="13" height="1" fill="#00ff00"/><rect x="354" y="146" width="1" height="2" fill="#00ff00"/><rect x="355" y="146" width="12" height="1" fill="#00ff00"/><rect x="367" y="145" width="1" height="2" fill="#00ff00"/><rect x="368" y="145" width="13" height="1" fill="#00ff00"/><rect x="381" y="144" width="1" height="2" fill="#00ff00"/><rect x="382" y="144" width="14" height="1" fill="#00ff00"/><rect x="396" y="143" width="1" height="2" fill="#00ff00"/><rect x="397" y="143" width="13" height="1" fill="#00ff00"/><rect x="410" y="142" width="1" height="2" fill="#00ff00"/><rect x="411" y="142" width="14" height="1" fill="#00ff00"/><rect x="425" y="141" width="1" height="2" fill="#00ff00"/><rect x="426" y="141" width="14" height="1" fill="#00ff00"/><rect x="440" y="140" width="1" height="2" fill="#00ff00"/><rect x="441" y="140" width="14" height="1" fill="#00ff00"/><rect x="455" y="139" width="1" height="2" fill="#00ff00"/><rect x="456" y="139" width="14" height="1" fill="#00ff00"/><rect x="470" y="138" width="1" height="2" fill="#00ff00"/><rect x="471" y="138" width="15" height="1" fill="#00ff00"/><rect x="486" y="137" width="1" height="2" fill="#00ff00"/><rect x="487" y="137" width="15" height="1" fill="#00ff00"/><rect x="502" y="136" width="1" height="2" fill="#00ff00"/><rect x="503" y="136" width="14" height="1" fill="#00ff00"/>
<g opacity="0.45"><rect x="62" y="176" width="4" height="1" fill="#00ff00"/><rect x="66" y="175" width="1" height="2" fill="#00ff00"/><rect x="67" y="175" width="6" height="1" fill="#00ff00"/><rect x="73" y="174" width="1" height="2" fill="#00ff00"/><rect x="74" y="174" width="6" height="1" fill="#00ff00"/><rect x="80" y="173" width="1" height="2" fill="#00ff00"/><rect x="81" y="173" width="7" height="1" fill="#00ff00"/><rect x="88" y="172" width="1" height="2" fill="#00ff00"/><rect x="89" y="172" width="6" height="1" fill="#00ff00"/><rect x="95" y="171" width="1" height="2" fill="#00ff00"/><rect x="96" y="171" width="7" height="1" fill="#00ff00"/><rect x="103" y="170" width="1" height="2" fill="#00ff00"/><rect x="104" y="170" width="8" height="1" fill="#00ff00"/><rect x="112" y="169" width="1" height="2" fill="#00ff00"/><rect x="113" y="169" width="7" height="1" fill="#00ff00"/><rect x="120" y="168" width="1" height="2" fill="#00ff00"/><rect x="121" y="168" width="8" height="1" fill="#00ff00"/><rect x="129" y="167" width="1" height="2" fill="#00ff00"/><rect x="130" y="167" width="8" height="1" fill="#00ff00"/><rect x="138" y="166" width="1" height="2" fill="#00ff00"/><rect x="139" y="166" width="8" height="1" fill="#00ff00"/><rect x="147" y="165" width="1" height="2" fill="#00ff00"/><rect x="148" y="165" width="9" height="1" fill="#00ff00"/><rect x="157" y="164" width="1" height="2" fill="#00ff00"/><rect x="158" y="164" width="8" height="1" fill="#00ff00"/><rect x="166" y="163" width="1" height="2" fill="#00ff00"/><rect x="167" y="163" width="9" height="1" fill="#00ff00"/><rect x="176" y="162" width="1" height="2" fill="#00ff00"/><rect x="177" y="162" width="9" height="1" fill="#00ff00"/><rect x="186" y="161" width="1" height="2" fill="#00ff00"/><rect x="187" y="161" width="10" height="1" fill="#00ff00"/><rect x="197" y="160" width="1" height="2" fill="#00ff00"/><rect x="198" y="160" width="9" height="1" fill="#00ff00"/><rect x="207" y="159" width="1" height="2" fill="#00ff00"/><rect x="208" y="159" width="10" height="1" fill="#00ff00"/><rect x="218" y="158" width="1" height="2" fill="#00ff00"/><rect x="219" y="158" width="10" height="1" fill="#00ff00"/><rect x="229" y="157" width="1" height="2" fill="#00ff00"/><rect x="230" y="157" width="11" height="1" fill="#00ff00"/><rect x="241" y="156" width="1" height="2" fill="#00ff00"/><rect x="242" y="156" width="10" height="1" fill="#00ff00"/><rect x="252" y="155" width="1" height="2" fill="#00ff00"/><rect x="253" y="155" width="11" height="1" fill="#00ff00"/><rect x="264" y="154" width="1" height="2" fill="#00ff00"/><rect x="265" y="154" width="11" height="1" fill="#00ff00"/><rect x="276" y="153" width="1" height="2" fill="#00ff00"/><rect x="277" y="153" width="12" height="1" fill="#00ff00"/><rect x="289" y="152" width="1" height="2" fill="#00ff00"/><rect x="290" y="152" width="11" height="1" fill="#00ff00"/><rect x="301" y="151" width="1" height="2" fill="#00ff00"/><rect x="302" y="151" width="12" height="1" fill="#00ff00"/><rect x="314" y="150" width="1" height="2" fill="#00ff00"/><rect x="315" y="150" width="12" height="1" fill="#00ff00"/><rect x="327" y="149" width="1" height="2" fill="#00ff00"/><rect x="328" y="149" width="12" height="1" fill="#00ff00"/><rect x="340" y="148" width="1" height="2" fill="#00ff00"/><rect x="341" y="148" width="13" height="1" fill="#00ff00"/><rect x="354" y="147" width="1" height="2" fill="#00ff00"/><rect x="355" y="147" width="12" height="1" fill="#00ff00"/><rect x="367" y="146" width="1" height="2" fill="#00ff00"/><rect x="368" y="146" width="13" height="1" fill="#00ff00"/><rect x="381" y="145" width="1" height="2" fill="#00ff00"/><rect x="382" y="145" width="14" height="1" fill="#00ff00"/><rect x="396" y="144" width="1" height="2" fill="#00ff00"/><rect x="397" y="144" width="13" height="1" fill="#00ff00"/><rect x="410" y="143" width="1" height="2" fill="#00ff00"/><rect x="411" y="143" width="14" height="1" fill="#00ff00"/><rect x="425" y="142" width="1" height="2" fill="#00ff00"/><rect x="426" y="142" width="14" height="1" fill="#00ff00"/><rect x="440" y="141" width="1" height="2" fill="#00ff00"/><rect x="441" y="141" width="14" height="1" fill="#00ff00"/><rect x="455" y="140" width="1" height="2" fill="#00ff00"/><rect x="456" y="140" width="14" height="1" fill="#00ff00"/><rect x="470" y="139" width="1" height="2" fill="#00ff00"/><rect x="471" y="139" width="15" height="1" fill="#00ff00"/><rect x="486" y="138" width="1" height="2" fill="#00ff00"/><rect x="487" y="138" width="15" height="1" fill="#00ff00"/><rect x="502" y="137" width="1" height="2" fill="#00ff00"/><rect x="503" y="137" width="14" height="1" fill="#00ff00"/></g>
<rect x="75" y="175" width="1" height="26" fill="#00e800"/><rect x="74" y="175" width="1" height="13" fill="#00e800"/>
<rect x="516" y="73" width="1" height="132" fill="#c0c0c0"/>
<rect x="61" y="223" width="470" height="132" fill="#008000"/>
<rect x="72" y="223" width="1" height="133" fill="#000080"/>
<rect x="82" y="223" width="1" height="133" fill="#000080"/>
<rect x="93" y="223" width="1" height="133" fill="#000080"/>
<rect x="103" y="223" width="1" height="133" fill="#000080"/>
<rect x="113" y="223" width="1" height="133" fill="#0000d0"/>
<rect x="124" y="223" width="1" height="133" fill="#000080"/>
<rect x="134" y="223" width="1" height="133" fill="#000080"/>
<rect x="145" y="223" width="1" height="133" fill="#000080"/>
<rect x="155" y="223" width="1" height="133" fill="#000080"/>
<rect x="165" y="223" width="1" height="133" fill="#0000d0"/>
<rect x="176" y="223" width="1" height="133" fill="#000080"/>
<rect x="186" y="223" width="1" height="133" fill="#000080"/>
<rect x="196" y="223" width="1" height="133" fill="#000080"/>
<rect x="207" y="223" width="1" height="133" fill="#000080"/>
<rect x="217" y="223" width="1" height="133" fill="#0000d0"/>
<rect x="228" y="223" width="1" height="133" fill="#000080"/>
<rect x="238" y="223" width="1" height="133" fill="#000080"/>
<rect x="248" y="223" width="1" height="133" fill="#000080"/>
<rect x="259" y="223" width="1" height="133" fill="#000080"/>
<rect x="269" y="223" width="1" height="133" fill="#0000d0"/>
<rect x="279" y="223" width="1" height="133" fill="#000080"/>
<rect x="290" y="223" width="1" height="133" fill="#000080"/>
<rect x="300" y="223" width="1" height="133" fill="#000080"/>
<rect x="311" y="223" width="1" height="133" fill="#000080"/>
<rect x="321" y="223" width="1" height="133" fill="#0000d0"/>
<rect x="331" y="223" width="1" height="133" fill="#000080"/>
<rect x="342" y="223" width="1" height="133" fill="#000080"/>
<rect x="352" y="223" width="1" height="133" fill="#000080"/>
<rect x="363" y="223" width="1" height="133" fill="#000080"/>
<rect x="373" y="223" width="1" height="133" fill="#0000d0"/>
<rect x="383" y="223" width="1" height="133" fill="#000080"/>
<rect x="394" y="223" width="1" height="133" fill="#000080"/>
<rect x="404" y="223" width="1" height="133" fill="#000080"/>
<rect x="414" y="223" width="1" height="133" fill="#000080"/>
<rect x="425" y="223" width="1" height="133" fill="#0000d0"/>
<rect x="435" y="223" width="1" height="133" fill="#000080"/>
<rect x="446" y="223" width="1" height="133" fill="#000080"/>
<rect x="456" y="223" width="1" height="133" fill="#000080"/>
<rect x="466" y="223" width="1" height="133" fill="#000080"/>
<rect x="477" y="223" width="1" height="133" fill="#0000d0"/>
<rect x="487" y="223" width="1" height="133" fill="#000080"/>
<rect x="497" y="223" width="1" height="133" fill="#000080"/>
<rect x="508" y="223" width="1" height="133" fill="#000080"/>
<rect x="518" y="223" width="1" height="133" fill="#000080"/>
<rect x="59" y="354" width="470" height="1" fill="#0000ff"/>
<rect x="60" y="341" width="469" height="1" fill="#000080"/>
<rect x="59" y="328" width="470" height="1" fill="#0000ff"/>
<rect x="60" y="315" width="469" height="1" fill="#000080"/>
<rect x="59" y="302" width="470" height="1" fill="#0000ff"/>
<rect x="60" y="289" width="469" height="1" fill="#000080"/>
<rect x="59" y="276" width="470" height="1" fill="#0000ff"/>
<rect x="60" y="263" width="469" height="1" fill="#000080"/>
<rect x="59" y="250" width="470" height="1" fill="#0000ff"/>
<rect x="60" y="237" width="469" height="1" fill="#000080"/>
<rect x="59" y="223" width="470" height="1" fill="#0000ff"/>
<rect x="64" y="341" width="1" height="13" fill="#ffff00"/>
<rect x="65" y="341" width="1" height="13" fill="#ffff00"/>
<rect x="75" y="341" width="1" height="13" fill="#ffff00"/>
<rect x="82" y="302" width="1" height="52" fill="#ffff00"/>
<rect x="102" y="276" width="1" height="78" fill="#ffff00"/>
<rect x="104" y="341" width="1" height="13" fill="#ffff00"/>
<rect x="107" y="341" width="1" height="13" fill="#ffff00"/>
<rect x="109" y="341" width="1" height="13" fill="#ffff00"/>
<rect x="114" y="328" width="1" height="26" fill="#ffff00"/>
<rect x="121" y="328" width="1" height="26" fill="#ffff00"/>
<rect x="132" y="341" width="1" height="13" fill="#ffff00"/>
<rect x="134" y="302" width="1" height="52" fill="#ffff00"/>
<rect x="135" y="328" width="1" height="26" fill="#ffff00"/>
<rect x="148" y="341" width="1" height="13" fill="#ffff00"/>
<rect x="178" y="341" width="1" height="13" fill="#ffff00"/>
<rect x="187" y="341" width="1" height="13" fill="#ffff00"/>
<rect x="188" y="289" width="1" height="65" fill="#ffff00"/>
<rect x="189" y="302" width="1" height="52" fill="#ffff00"/>
<rect x="194" y="341" width="1" height="13" fill="#ffff00"/>
<rect x="196" y="289" width="1" height="65" fill="#ffff00"/>
<rect x="224" y="341" width="1" height="13" fill="#ffff00"/>
<rect x="229" y="341" width="1" height="13" fill="#ffff00"/>
<rect x="247" y="315" width="1" height="39" fill="#ffff00"/>
<rect x="283" y="302" width="1" height="52" fill="#ffff00"/>
<rect x="284" y="302" width="1" height="52" fill="#ffff00"/>
<rect x="288" y="302" width="1" height="52" fill="#ffff00"/>
<rect x="289" y="289" width="1" height="65" fill="#ffff00"/>
<rect x="290" y="302" width="1" height="52" fill="#ffff00"/>
<rect x="291" y="328" width="1" height="26" fill="#ffff00"/>
<rect x="292" y="341" width="1" height="13" fill="#ffff00"/>
<rect x="301" y="328" width="1" height="26" fill="#ffff00"/>
<rect x="303" y="328" width="1" height="26" fill="#ffff00"/>
<rect x="306" y="302" width="1" height="52" fill="#ffff00"/>
<rect x="317" y="341" width="1" height="13" fill="#ffff00"/>
<rect x="322" y="341" width="1" height="13" fill="#ffff00"/>
<rect x="323" y="328" width="1" height="26" fill="#ffff00"/>
<rect x="330" y="341" width="1" height="13" fill="#ffff00"/>
<rect x="341" y="341" width="1" height="13" fill="#ffff00"/>
<rect x="348" y="302" width="1" height="52" fill="#ffff00"/>
<rect x="349" y="289" width="1" height="65" fill="#ffff00"/>
<rect x="350" y="341" width="1" height="13" fill="#ffff00"/>
<rect x="351" y="315" width="1" height="39" fill="#ffff00"/>
<rect x="356" y="315" width="1" height="39" fill="#ffff00"/>
<rect x="358" y="328" width="1" height="26" fill="#ffff00"/>
<rect x="359" y="302" width="1" height="52" fill="#ffff00"/>
<rect x="360" y="302" width="1" height="52" fill="#ffff00"/>
<rect x="361" y="315" width="1" height="39" fill="#ffff00"/>
<rect x="379" y="341" width="1" height="13" fill="#ffff00"/>
<rect x="390" y="328" width="1" height="26" fill="#ffff00"/>
<rect x="394" y="315" width="1" height="39" fill="#ffff00"/>
<rect x="395" y="315" width="1" height="39" fill="#ffff00"/>
<rect x="403" y="328" width="1" height="26" fill="#ffff00"/>
<rect x="417" y="302" width="1" height="52" fill="#ffff00"/>
<rect x="421" y="315" width="1" height="39" fill="#ffff00"/>
<rect x="423" y="328" width="1" height="26" fill="#ffff00"/>
<rect x="431" y="341" width="1" height="13" fill="#ffff00"/>
<rect x="433" y="341" width="1" height="13" fill="#ffff00"/>
<rect x="436" y="341" width="1" height="13" fill="#ffff00"/>
<rect x="437" y="341" width="1" height="13" fill="#ffff00"/>
<rect x="444" y="341" width="1" height="13" fill="#ffff00"/>
<rect x="445" y="341" width="1" height="13" fill="#ffff00"/>
<rect x="450" y="328" width="1" height="26" fill="#ffff00"/>
<rect x="459" y="328" width="1" height="26" fill="#ffff00"/>
<rect x="465" y="315" width="1" height="39" fill="#ffff00"/>
<rect x="466" y="341" width="1" height="13" fill="#ffff00"/>
<rect x="467" y="341" width="1" height="13" fill="#ffff00"/>
<rect x="474" y="302" width="1" height="52" fill="#ffff00"/>
<rect x="475" y="315" width="1" height="39" fill="#ffff00"/>
<rect x="476" y="315" width="1" height="39" fill="#ffff00"/>
<rect x="485" y="341" width="1" height="13" fill="#ffff00"/>
<rect x="490" y="341" width="1" height="13" fill="#ffff00"/>
<rect x="491" y="315" width="1" height="39" fill="#ffff00"/>
<rect x="493" y="341" width="1" height="13" fill="#ffff00"/>
<rect x="498" y="328" width="1" height="26" fill="#ffff00"/>
<rect x="499" y="328" width="1" height="26" fill="#ffff00"/>
<rect x="500" y="341" width="1" height="13" fill="#ffff00"/>
<rect x="501" y="328" width="1" height="26" fill="#ffff00"/>
<rect x="502" y="328" width="1" height="26" fill="#ffff00"/>
<rect x="504" y="341" width="1" height="13" fill="#ffff00"/>
<rect x="506" y="289" width="1" height="65" fill="#ffff00"/>
<rect x="507" y="341" width="1" height="13" fill="#ffff00"/>
<rect x="513" y="302" width="1" height="52" fill="#ffff00"/>
<rect x="515" y="328" width="1" height="26" fill="#ffff00"/>
<rect x="516" y="328" width="1" height="26" fill="#ffff00"/>
<polyline fill="none" stroke="#ff00ff" stroke-width="1.5" stroke-linejoin="miter" shape-rendering="auto" points="62.5,289.5 63.5,290.5 64.5,290.5 65.5,292.5 66.5,290.5 67.5,296.5 68.5,293.5 69.5,295.5 70.5,294.0 71.5,292.0 72.5,294.5 73.5,295.5 74.5,294.5 75.5,294.5 76.5,293.5 77.5,294.5 78.5,293.5 79.5,295.0 80.5,297.0 81.5,293.5 82.5,294.5 83.5,293.5 84.5,293.5 85.5,293.5 86.5,295.5 87.5,294.0 88.5,294.0 89.5,294.0 90.5,295.0 91.5,297.0 92.5,296.0 93.5,296.5 94.5,294.0 95.5,294.0 96.5,293.5 97.5,296.0 98.5,296.5 99.5,294.0 100.5,293.0 101.5,295.0 102.5,291.5 103.5,294.0 104.5,293.0 105.5,294.5 106.5,291.0 107.5,294.0 108.5,292.0 109.5,294.5 110.5,293.5 111.5,295.0 112.5,293.5 113.5,293.5 114.5,294.0 115.5,294.0 116.5,293.5 117.5,294.0 118.5,295.0 119.5,293.0 120.5,296.5 121.5,294.0 122.5,295.0 123.5,295.0 124.5,293.5 125.5,296.0 126.5,293.0 127.5,294.0 128.5,293.0 129.5,295.0 130.5,292.0 131.5,292.0 132.5,295.5 133.5,294.0 134.5,293.5 135.5,295.0 136.5,297.5 137.5,293.5 138.5,294.5 139.5,297.0 140.5,295.0 141.5,294.0 142.5,295.0 143.5,295.5 144.5,295.5 145.5,293.5 146.5,293.5 147.5,295.5 148.5,293.5 149.5,291.5 150.5,294.5 151.5,295.5 152.5,296.0 153.5,294.0 154.5,294.0 155.5,294.0 156.5,295.0 157.5,294.0 158.5,296.0 159.5,294.0 160.5,294.5 161.5,295.0 162.5,295.5 163.5,296.0 164.5,295.0 165.5,295.0 166.5,296.0 167.5,295.0 168.5,296.0 169.5,295.5 170.5,294.5 171.5,294.0 172.5,295.0 173.5,294.0 174.5,295.0 175.5,296.0 176.5,296.0 177.5,296.0 178.5,294.0 179.5,294.0 180.5,295.0 181.5,295.0 182.5,294.0 183.5,296.0 184.5,294.0 185.5,295.0 186.5,294.5 187.5,294.0 188.5,295.5 189.5,295.0 190.5,296.0 191.5,294.0 192.5,293.0 193.5,295.5 194.5,294.5 195.5,298.0 196.5,297.0 197.5,295.0 198.5,294.0 199.5,295.5 200.5,298.0 201.5,294.0 202.5,296.0 203.5,295.0 204.5,295.5 205.5,294.0 206.5,293.0 207.5,296.0 208.5,296.0 209.5,295.0 210.5,294.0 211.5,292.5 212.5,294.0 213.5,295.5 214.5,295.5 215.5,293.5 216.5,295.5 217.5,294.5 218.5,294.0 219.5,294.5 220.5,295.5 221.5,294.5 222.5,294.0 223.5,294.5 224.5,294.5 225.5,293.5 226.5,291.5 227.5,295.5 228.5,293.5 229.5,297.0 230.5,295.5 231.5,295.5 232.5,295.0 233.5,294.5 234.5,295.0 235.5,293.0 236.5,293.0 237.5,293.5 238.5,291.5 239.5,292.0 240.5,294.5 241.5,294.0 242.5,293.0 243.5,293.0 244.5,294.0 245.5,297.0 246.5,295.0 247.5,293.5 248.5,294.0 249.5,293.5 250.5,294.5 251.5,294.5 252.5,294.0 253.5,294.0 254.5,293.5 255.5,293.5 256.5,294.0 257.5,295.0 258.5,295.0 259.5,293.5 260.5,296.5 261.5,294.5 262.5,296.5 263.5,294.5 264.5,294.0 265.5,291.0 266.5,291.5 267.5,293.0 268.5,293.5 269.5,293.0 270.5,293.5 271.5,291.0 272.5,294.5 273.5,295.0 274.5,295.0 275.5,297.5 276.5,293.5 277.5,294.0 278.5,295.0 279.5,295.5 280.5,291.5 281.5,295.0 282.5,295.5 283.5,294.5 284.5,295.0 285.5,294.5 286.5,293.5 287.5,294.0 288.5,292.5 289.5,295.0 290.5,294.0 291.5,292.5 292.5,294.5 293.5,293.5 294.5,293.5 295.5,295.0 296.5,296.0 297.5,294.0 298.5,296.0 299.5,294.0 300.5,292.0 301.5,295.0 302.5,296.0 303.5,295.0 304.5,293.0 305.5,295.0 306.5,296.0 307.5,294.0 308.5,294.0 309.5,294.0 310.5,294.5 311.5,294.5 312.5,294.0 313.5,296.0 314.5,296.0 315.5,295.5 316.5,296.0 317.5,295.0 318.5,292.5 319.5,294.0 320.5,296.0 321.5,293.0 322.5,298.0 323.5,292.5 324.5,296.0 325.5,295.0 326.5,292.0 327.5,292.5 328.5,297.0 329.5,292.0 330.5,295.5 331.5,294.0 332.5,294.5 333.5,296.0 334.5,296.0 335.5,294.5 336.5,294.5 337.5,294.0 338.5,295.0 339.5,295.5 340.5,295.0 341.5,295.0 342.5,295.0 343.5,295.0 344.5,294.0 345.5,294.0 346.5,292.0 347.5,294.0 348.5,292.0 349.5,294.5 350.5,295.5 351.5,295.5 352.5,295.5 353.5,294.5 354.5,294.0 355.5,296.0 356.5,294.5 357.5,294.5 358.5,294.0 359.5,295.0 360.5,294.0 361.5,295.0 362.5,295.5 363.5,293.5 364.5,295.5 365.5,295.5 366.5,295.5 367.5,292.0 368.5,293.5 369.5,295.5 370.5,295.0 371.5,294.0 372.5,295.0 373.5,293.5 374.5,295.5 375.5,294.5 376.5,294.0 377.5,294.0 378.5,292.0 379.5,293.0 380.5,295.0 381.5,294.0 382.5,294.5 383.5,293.5 384.5,296.0 385.5,294.0 386.5,294.0 387.5,293.5 388.5,293.0 389.5,296.5 390.5,294.0 391.5,293.0 392.5,294.0 393.5,297.0 394.5,297.0 395.5,295.0 396.5,294.0 397.5,294.5 398.5,295.0 399.5,294.5 400.5,295.0 401.5,293.0 402.5,293.0 403.5,294.5 404.5,295.0 405.5,295.0 406.5,293.0 407.5,293.0 408.5,295.0 409.5,293.5 410.5,293.5 411.5,295.0 412.5,294.5 413.5,295.0 414.5,294.0 415.5,293.0 416.5,293.0 417.5,293.5 418.5,293.5 419.5,296.0 420.5,293.5 421.5,294.5 422.5,294.5 423.5,295.5 424.5,294.5 425.5,294.5 426.5,294.5 427.5,295.5 428.5,295.5 429.5,295.0 430.5,293.5 431.5,294.5 432.5,294.5 433.5,295.5 434.5,294.5 435.5,293.5 436.5,294.5 437.5,295.5 438.5,295.5 439.5,295.5 440.5,294.5 441.5,297.5 442.5,294.5 443.5,295.0 444.5,292.5 445.5,294.0 446.5,294.5 447.5,294.0 448.5,294.0 449.5,298.0 450.5,292.5 451.5,296.0 452.5,294.0 453.5,296.0 454.5,296.0 455.5,294.5 456.5,295.0 457.5,293.0 458.5,296.0 459.5,294.0 460.5,297.0 461.5,296.0 462.5,294.0 463.5,294.0 464.5,296.0 465.5,294.0 466.5,294.0 467.5,295.0 468.5,294.5 469.5,296.0 470.5,295.0 471.5,296.0 472.5,294.0 473.5,295.0 474.5,294.0 475.5,295.0 476.5,295.5 477.5,292.5 478.5,298.0 479.5,297.0 480.5,294.0 481.5,292.0 482.5,294.5 483.5,296.0 484.5,294.0 485.5,296.0 486.5,294.5 487.5,294.5 488.5,296.0 489.5,296.0 490.5,296.0 491.5,295.5 492.5,295.0 493.5,294.0 494.5,295.0 495.5,297.0 496.5,295.0 497.5,295.0 498.5,294.5 499.5,295.0 500.5,295.0 501.5,294.0 502.5,294.5 503.5,294.5 504.5,293.5 505.5,294.5 506.5,294.0 507.5,295.5 508.5,292.5 509.5,294.5 510.5,293.5 511.5,294.0 512.5,293.5 513.5,297.5 514.5,295.0 515.5,293.5"/>
<rect x="516" y="224" width="1" height="131" fill="#c0c0c0"/>
</svg>
<div id="txt" style="position:absolute;left:0;top:0;width:743px;height:449px;will-change:transform;">
<span class="t" style="left:6.43px;top:7.67px;font-size:12.5px;font-weight:bold;transform:scaleX(1.1324);">CD</span>
<span class="t" style="left:30.72px;top:7.67px;font-size:12.5px;font-weight:bold;transform:scaleX(1.0552);">Speed</span>
<span class="t" style="left:73.57px;top:7.67px;font-size:12.5px;font-weight:bold;transform:scaleX(1.1429);">:</span>
<span class="t" style="left:84.22px;top:7.67px;font-size:12.5px;font-weight:bold;transform:scaleX(1.0396);">Disc</span>
<span class="t" style="left:116.49px;top:7.67px;font-size:12.5px;font-weight:bold;transform:scaleX(1.0299);">Quality</span>
<span class="t" style="left:165.19px;top:7.67px;font-size:12.5px;font-weight:bold;transform:scaleX(1.2449);">Test</span>
<span class="t" style="left:203.98px;top:7.67px;font-size:12.5px;font-weight:bold;transform:scaleX(1.5385);">-</span>
<span class="t" style="left:215.77px;top:7.67px;font-size:12.5px;font-weight:bold;transform:scaleX(0.9784);">BENQ</span>
<span class="t" style="left:271.29px;top:7.67px;font-size:12.5px;font-weight:bold;transform:scaleX(0.9505);">DVD</span>
<span class="t" style="left:304.02px;top:7.67px;font-size:12.5px;font-weight:bold;transform:scaleX(0.9701);">DD</span>
<span class="t" style="left:326.46px;top:7.67px;font-size:12.5px;font-weight:bold;transform:scaleX(1.0474);">DW1620</span>
<span class="t" style="left:398.70px;top:7.67px;font-size:12.5px;font-weight:bold;transform:scaleX(1.0667);">B7S9</span>
<span class="t" style="left:21.52px;top:36.84px;transform:scaleX(0.9794);">Disc Quality</span>
<span class="t" style="left:274.80px;top:55.84px;transform:scaleX(0.9399);">recorded</span>
<span class="t" style="left:323.50px;top:55.84px;">with</span>
<span class="t" style="left:348.86px;top:55.84px;transform:scaleX(0.8940);">PLEXTOR</span>
<span class="t" style="left:403.05px;top:55.84px;transform:scaleX(0.9457);">DVDR</span>
<span class="t" style="left:446.55px;top:55.84px;transform:scaleX(0.9468);">PX-716A</span>
<span class="t" style="left:504.50px;top:55.84px;transform:scaleX(0.8793);">v1.04</span>
<span class="t" style="left:42.54px;top:64.84px;transform:scaleX(0.9120);">20</span>
<span class="t" style="left:42.03px;top:91.84px;transform:scaleX(0.9702);">16</span>
<span class="t" style="left:42.03px;top:117.84px;transform:scaleX(0.9702);">12</span>
<span class="t" style="left:48.42px;top:143.84px;transform:scaleX(0.9565);">8</span>
<span class="t" style="left:48.67px;top:169.84px;transform:scaleX(0.9167);">4</span>
<span class="t" style="left:532.70px;top:65.84px;transform:scaleX(0.9021);">16</span>
<span class="t" style="left:532.72px;top:81.84px;transform:scaleX(0.8833);">14</span>
<span class="t" style="left:532.70px;top:97.84px;transform:scaleX(0.9021);">12</span>
<span class="t" style="left:532.72px;top:114.84px;transform:scaleX(0.8833);">10</span>
<span class="t" style="left:533.14px;top:130.84px;transform:scaleX(0.9217);">8</span>
<span class="t" style="left:533.14px;top:146.84px;transform:scaleX(0.9217);">6</span>
<span class="t" style="left:533.38px;top:163.84px;transform:scaleX(0.8833);">4</span>
<span class="t" style="left:533.12px;top:179.84px;transform:scaleX(0.9636);">2</span>
<span class="t" style="left:56.88px;top:204.84px;transform:scaleX(0.8444);">0.0</span>
<span class="t" style="left:56.88px;top:354.84px;transform:scaleX(0.8444);">0.0</span>
<span class="t" style="left:108.78px;top:204.84px;transform:scaleX(0.8444);">0.5</span>
<span class="t" style="left:108.78px;top:354.84px;transform:scaleX(0.8444);">0.5</span>
<span class="t" style="left:160.23px;top:204.84px;transform:scaleX(0.8721);">1.0</span>
<span class="t" style="left:160.23px;top:354.84px;transform:scaleX(0.8721);">1.0</span>
<span class="t" style="left:212.13px;top:204.84px;transform:scaleX(0.8721);">1.5</span>
<span class="t" style="left:212.13px;top:354.84px;transform:scaleX(0.8721);">1.5</span>
<span class="t" style="left:264.48px;top:204.84px;transform:scaleX(0.8444);">2.0</span>
<span class="t" style="left:264.48px;top:354.84px;transform:scaleX(0.8444);">2.0</span>
<span class="t" style="left:316.38px;top:204.84px;transform:scaleX(0.8444);">2.5</span>
<span class="t" style="left:316.38px;top:354.84px;transform:scaleX(0.8444);">2.5</span>
<span class="t" style="left:368.28px;top:204.84px;transform:scaleX(0.8444);">3.0</span>
<span class="t" style="left:368.28px;top:354.84px;transform:scaleX(0.8444);">3.0</span>
<span class="t" style="left:420.18px;top:204.84px;transform:scaleX(0.8444);">3.5</span>
<span class="t" style="left:420.18px;top:354.84px;transform:scaleX(0.8444);">3.5</span>
<span class="t" style="left:472.29px;top:204.84px;transform:scaleX(0.8313);">4.0</span>
<span class="t" style="left:472.29px;top:354.84px;transform:scaleX(0.8313);">4.0</span>
<span class="t" style="left:524.19px;top:204.84px;transform:scaleX(0.8313);">4.5</span>
<span class="t" style="left:524.19px;top:354.84px;transform:scaleX(0.8313);">4.5</span>
<span class="t" style="left:42.05px;top:214.84px;transform:scaleX(0.9500);">10</span>
<span class="t" style="left:48.42px;top:241.84px;transform:scaleX(0.9565);">8</span>
<span class="t" style="left:48.42px;top:267.84px;transform:scaleX(0.9565);">6</span>
<span class="t" style="left:48.67px;top:293.84px;transform:scaleX(0.9167);">4</span>
<span class="t" style="left:48.40px;top:319.84px;">2</span>
<span class="t" style="left:532.77px;top:214.84px;transform:scaleX(0.8640);">20</span>
<span class="t" style="left:532.28px;top:241.84px;transform:scaleX(0.9191);">16</span>
<span class="t" style="left:532.28px;top:267.84px;transform:scaleX(0.9191);">12</span>
<span class="t" style="left:532.73px;top:293.84px;transform:scaleX(0.9391);">8</span>
<span class="t" style="left:532.98px;top:319.84px;transform:scaleX(0.9000);">4</span>
<span class="t" style="left:39.04px;top:365.84px;transform:scaleX(0.9565);">PI Errors</span>
<span class="t" style="left:219.54px;top:365.84px;transform:scaleX(0.9554);">PI Failures</span>
<span class="t" style="left:401.45px;top:365.84px;transform:scaleX(1.0196);">Jitter</span>
<span class="t" style="left:26.50px;top:381.84px;transform:scaleX(0.9903);">平均:</span>
<span class="t" style="left:155.06px;top:380.84px;color:#00007f;transform:scaleX(0.8764);">3.48</span>
<span class="t" style="left:26.25px;top:399.84px;">最大:</span>
<span class="t" style="left:164.64px;top:398.84px;color:#00007f;transform:scaleX(0.8636);">11</span>
<span class="t" style="left:26.22px;top:417.84px;transform:scaleX(1.0435);">合計 :</span>
<span class="t" style="left:145.04px;top:416.84px;color:#00007f;transform:scaleX(0.9147);">34656</span>
<span class="t" style="left:208.70px;top:381.84px;transform:scaleX(0.9903);">平均:</span>
<span class="t" style="left:337.06px;top:380.84px;color:#00007f;transform:scaleX(0.8764);">0.12</span>
<span class="t" style="left:208.45px;top:399.84px;">最大:</span>
<span class="t" style="left:351.02px;top:398.84px;color:#00007f;transform:scaleX(0.9565);">6</span>
<span class="t" style="left:208.42px;top:417.84px;transform:scaleX(1.0435);">合計 :</span>
<span class="t" style="left:332.05px;top:416.84px;color:#00007f;transform:scaleX(0.9505);">1413</span>
<span class="t" style="left:388.70px;top:381.84px;transform:scaleX(0.9903);">平均:</span>
<span class="t" style="left:388.45px;top:399.84px;">最大:</span>
<span class="t" style="left:507.08px;top:380.84px;color:#00007f;transform:scaleX(0.8356);">8.95 %</span>
<span class="t" style="left:506.65px;top:398.84px;color:#00007f;transform:scaleX(0.8472);">10.9 %</span>
<span class="t" style="left:388.57px;top:421.84px;transform:scaleX(0.9266);">PO Failures:</span>
<span class="t" style="left:531.02px;top:421.84px;color:#00007f;transform:scaleX(0.9565);">0</span>
<span class="t" style="left:582.21px;top:60.34px;transform:scaleX(1.0337);">開始</span>
<span class="t" style="left:667.10px;top:60.34px;transform:scaleX(0.9935);">終了(<u>X</u>)</span>
<span class="t" style="left:568.94px;top:84.12px;color:#008080;font-size:13.5px;transform:scaleX(0.6846);">ディスク</span>
<span class="t" style="left:604.73px;top:84.34px;color:#008080;transform:scaleX(0.9435);">情報</span>
<span class="t" style="left:567.53px;top:99.84px;transform:scaleX(0.6667);"><span style="font-size:13.5px">タイプ:</span></span>
<span class="t" style="left:615.96px;top:98.84px;color:#00007f;transform:scaleX(1.0400);">DVD-R</span>
<span class="t" style="left:567.77px;top:113.84px;transform:scaleX(0.9283);">ID:</span>
<span class="t" style="left:616.08px;top:113.84px;color:#00007f;transform:scaleX(0.9155);">UTJR001001</span>
<span class="t" style="left:566.22px;top:129.84px;transform:scaleX(1.1042);">日付:</span>
<span class="t" style="left:616.53px;top:128.84px;color:#00007f;transform:scaleX(0.9379);">8 March 2005</span>
<span class="t" style="left:567.77px;top:143.84px;transform:scaleX(0.9268);">Label:</span>
<span class="t" style="left:616.56px;top:143.84px;color:#00007f;transform:scaleX(0.8735);">CDS_TEST_B2</span>
<span class="t" style="left:569.01px;top:164.34px;color:#008080;transform:scaleX(0.9882);">Settings</span>
<span class="t" style="left:567.99px;top:186.84px;transform:scaleX(1.0215);">転送速度</span>
<span class="t" style="left:633.61px;top:187.34px;transform:scaleX(1.0489);">最大</span>
<span class="t" style="left:567.15px;top:211.84px;transform:scaleX(1.0787);">開始</span>
<span class="t" style="left:633.12px;top:209.84px;transform:scaleX(0.9574);">0000 MB</span>
<span class="t" style="left:567.99px;top:234.34px;transform:scaleX(1.0106);">終了位置</span>
<span class="t" style="left:633.36px;top:232.84px;transform:scaleX(0.9524);">4489 MB</span>
<span class="t" style="left:584.52px;top:253.84px;transform:scaleX(0.9504);">Show C1/PIE</span>
<span class="t" style="left:584.52px;top:270.51px;transform:scaleX(0.9606);">Show C2/PIF</span>
<span class="t" style="left:584.51px;top:287.18px;transform:scaleX(0.9872);">Show Jitter</span>
<span class="t" style="left:584.54px;top:303.85px;transform:scaleX(0.9266);">Show Read Speed</span>
<span class="t" style="left:584.53px;top:320.52px;transform:scaleX(0.9337);">Show Write Speed</span>
<span class="t" style="left:567.31px;top:348.84px;transform:scaleX(1.1126);">品質</span>
<span class="t" style="left:593.27px;top:348.62px;font-size:13.5px;transform:scaleX(0.6217);">スコア:</span>
<span class="t" style="left:694.63px;top:347.84px;color:#00007f;transform:scaleX(0.9388);">97</span>
<span class="t" style="left:567.94px;top:380.84px;transform:scaleX(1.0101);">進行状況:</span>
<span class="t" style="left:677.73px;top:379.84px;color:#00007f;transform:scaleX(0.8672);">100 %</span>
<span class="t" style="left:567.86px;top:400.12px;font-size:13.5px;transform:scaleX(0.6735);">ポジション:</span>
<span class="t" style="left:661.76px;top:398.84px;color:#00007f;transform:scaleX(0.9524);">4488 MB</span>
<span class="t" style="left:567.94px;top:417.84px;transform:scaleX(1.0196);">速度:</span>
<span class="t" style="left:676.05px;top:416.34px;color:#00007f;transform:scaleX(0.8971);">8.30 X</span>
</div>
</body></html>
